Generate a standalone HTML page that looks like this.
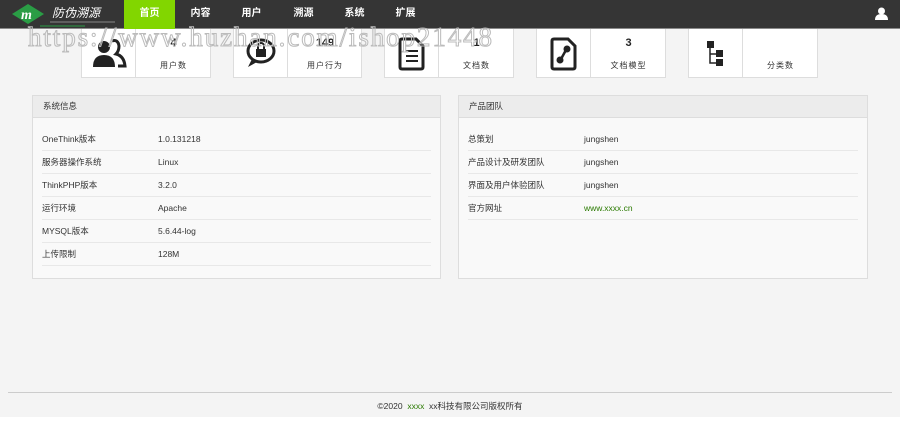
<!DOCTYPE html>
<html><head><meta charset="utf-8"><style>
*{margin:0;padding:0;box-sizing:border-box}
body{width:900px;height:447px;background:#fff;font-family:"Liberation Sans","Noto Sans CJK SC",sans-serif;font-size:8px;color:#333;position:relative;overflow:hidden}
.bg{position:absolute;left:0;top:0;width:900px;height:417px;background:#f4f4f4}
.hd{position:absolute;left:0;top:0;width:900px;height:29px;background:#353535;border-bottom:1px solid #8a8a8a}
.nav a{position:absolute;top:0;height:29px;line-height:28px;color:#fff;font-size:10px;font-weight:bold;text-align:center;width:51px}
.card{position:absolute;top:29px;height:49px;background:#fff;border:1px solid #ddd;border-top:none}
.card .ic{position:absolute;left:0;top:0;width:54px;height:48px;border-right:1px solid #ddd}
.card .n{position:absolute;left:55px;right:0;top:8px;text-align:center;font-weight:bold;font-size:11px;color:#222}
.card .l{position:absolute;left:55px;right:0;top:31px;text-align:center;font-size:8px;color:#333;letter-spacing:1px}
.panel{position:absolute;top:95px;height:184px;background:#f9f9f9;border:1px solid #ddd}
.panel .ph{height:22px;background:#ececec;border-bottom:1px solid #ddd;line-height:21px;padding-left:10px;font-size:8.5px;color:#333}
.rows{padding:10px 9px 0 9px}
.row{height:23px;border-bottom:1px solid #e8e8e8;line-height:23px;position:relative;font-size:8.5px;color:#333}
.row span{position:absolute;left:116px}
.wm{position:absolute;left:28px;top:22px;font-family:"Liberation Serif",serif;font-size:27px;color:transparent;-webkit-text-stroke:1px #bbb;letter-spacing:1.9px;white-space:nowrap}
</style></head><body>
<div class="bg"></div>
<div class="hd">
 <svg style="position:absolute;left:10px;top:2px" width="110" height="27">
  <polygon points="18,2 34,12 18,22 2,12" fill="#2a9d45"/>
  <text x="11" y="17" font-family="Liberation Serif" font-style="italic" font-weight="bold" font-size="14" fill="#fff">m</text>
  <text x="42" y="15" font-family="Noto Sans CJK SC" font-size="12" fill="#fff" font-style="italic">防伪溯源</text>
  <line x1="40" y1="20" x2="105" y2="20" stroke="#888" stroke-width="1"/>
  <line x1="30" y1="24" x2="75" y2="24" stroke="#2a9d45" stroke-width="1"/>
 </svg>
 <div class="nav">
  <a style="left:124px;background:#82d600">首页</a>
  <a style="left:175px">内容</a>
  <a style="left:226px">用户</a>
  <a style="left:278px">溯源</a>
  <a style="left:329px">系统</a>
  <a style="left:380px">扩展</a>
 </div>
 <svg style="position:absolute;left:875px;top:7px" width="13" height="13"><circle cx="6.5" cy="4" r="3.5" fill="#fff"/><path d="M0 13 Q0 7 6.5 7 Q13 7 13 13Z" fill="#fff"/></svg>
</div>

<div class="card" style="left:81px;width:130px"><div class="ic"><svg width="54" height="48"><circle cx="22" cy="18" r="6" fill="#222"/><path d="M11 38 Q11 26 22 26 Q33 26 33 38Z" fill="#222"/><path d="M30 12 q6 -2 7 5 q0 5 -3 8 q8 2 9 12 h-7" fill="none" stroke="#222" stroke-width="3"/></svg></div><div class="n">4</div><div class="l">用户数</div></div>
<div class="card" style="left:233px;width:129px"><div class="ic"><svg width="54" height="48"><ellipse cx="27" cy="22" rx="13" ry="11" fill="none" stroke="#222" stroke-width="3"/><path d="M18 30 l-4 8 l9 -5" fill="#222"/><rect x="22" y="20" width="10" height="8" fill="#222"/><path d="M24 20 v-3 a3 3 0 0 1 6 0 v3" fill="none" stroke="#222" stroke-width="2"/></svg></div><div class="n">149</div><div class="l">用户行为</div></div>
<div class="card" style="left:384px;width:130px"><div class="ic"><svg width="54" height="48"><path d="M17 10 h14 l7 7 v21 q0 2 -2 2 h-19 q-2 0 -2 -2 v-26 q0 -2 2 -2z" fill="none" stroke="#222" stroke-width="3"/><path d="M21 22 h12 M21 27 h12 M21 32 h12" stroke="#222" stroke-width="2"/></svg></div><div class="n">1</div><div class="l">文档数</div></div>
<div class="card" style="left:536px;width:130px"><div class="ic"><svg width="54" height="48"><path d="M17 10 h14 l7 7 v21 q0 2 -2 2 h-19 q-2 0 -2 -2 v-26 q0 -2 2 -2z" fill="none" stroke="#222" stroke-width="3"/><circle cx="30" cy="20" r="3.5" fill="#222"/><circle cx="23" cy="31" r="3.5" fill="#222"/><path d="M29 21 L24 30" stroke="#222" stroke-width="2.5"/></svg></div><div class="n">3</div><div class="l">文档模型</div></div>
<div class="card" style="left:688px;width:130px"><div class="ic"><svg width="54" height="48"><rect x="18" y="12" width="7" height="7" fill="#222"/><rect x="27" y="21" width="7" height="7" fill="#222"/><rect x="27" y="30" width="7" height="7" fill="#222"/><path d="M21 19 v15 h6 M21 25 h6" stroke="#222" stroke-width="1.5" fill="none"/></svg></div><div class="n"></div><div class="l">分类数</div></div>

<div class="wm">https://www.huzhan.com/ishop21448</div>

<div class="panel" style="left:32px;width:409px"><div class="ph">系统信息</div><div class="rows">
<div class="row">OneThink版本<span>1.0.131218</span></div>
<div class="row">服务器操作系统<span>Linux</span></div>
<div class="row">ThinkPHP版本<span>3.2.0</span></div>
<div class="row">运行环境<span>Apache</span></div>
<div class="row">MYSQL版本<span>5.6.44-log</span></div>
<div class="row">上传限制<span>128M</span></div>
</div></div>
<div class="panel" style="left:458px;width:410px"><div class="ph">产品团队</div><div class="rows">
<div class="row">总策划<span>jungshen</span></div>
<div class="row">产品设计及研发团队<span>jungshen</span></div>
<div class="row">界面及用户体验团队<span>jungshen</span></div>
<div class="row">官方网址<span style="color:#2a7a00">www.xxxx.cn</span></div>
</div></div>

<div style="position:absolute;left:8px;top:392px;width:884px;border-top:1px solid #ccc"></div>
<div style="position:absolute;left:0;top:400px;width:900px;text-align:center;font-size:8.5px;color:#333">©2020 &nbsp;<span style="color:#2a7a00">xxxx</span>&nbsp; xx科技有限公司版权所有</div>
</body></html>
